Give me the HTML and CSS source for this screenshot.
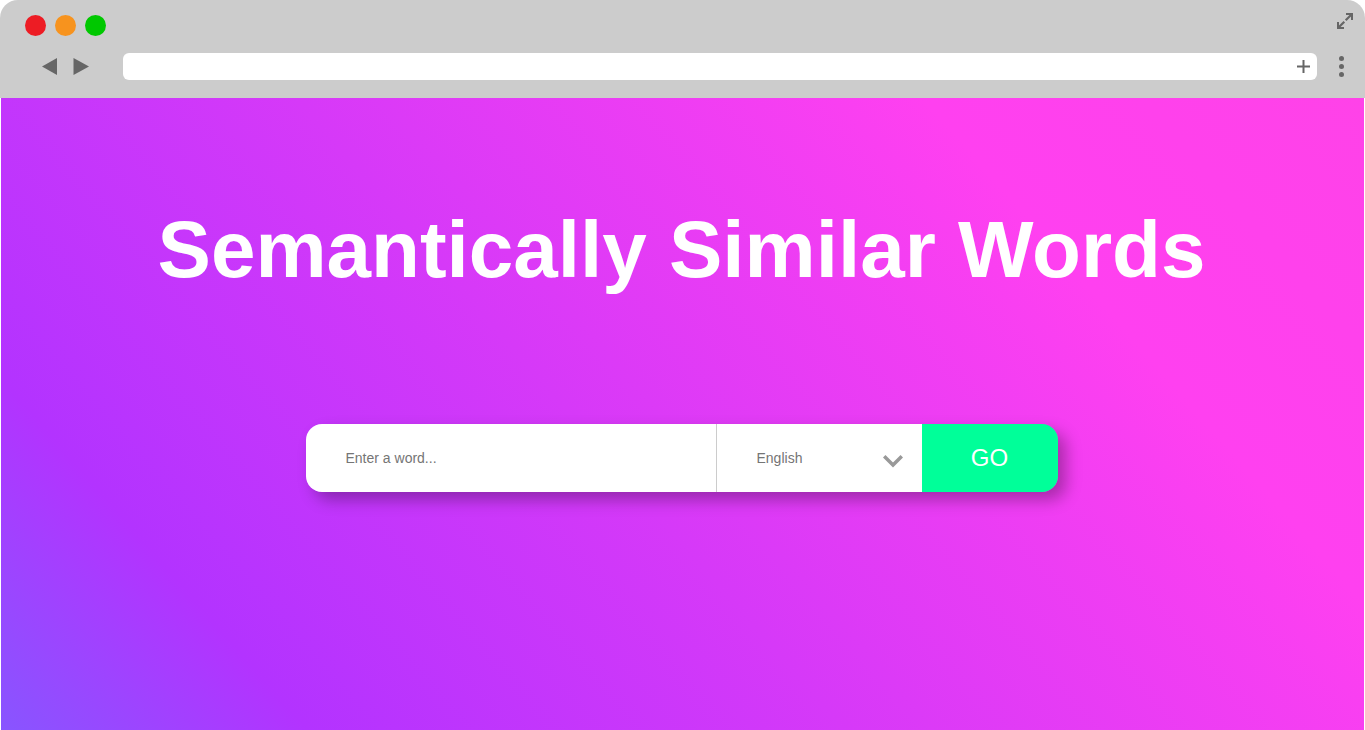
FILE: index.html
```html
<!DOCTYPE html>
<html lang="en">
<head>
<meta charset="utf-8">
<title>Semantically Similar Words</title>
<meta name="viewport" content="width=device-width, initial-scale=1">
<link rel="stylesheet" href="styles.css">
</head>
<body>
<div class="window">
  <header class="chrome">
    <div class="title-bar">
      <div class="lights">
        <button class="light light-close" type="button" aria-label="Close"></button>
        <button class="light light-minimize" type="button" aria-label="Minimize"></button>
        <button class="light light-zoom" type="button" aria-label="Zoom"></button>
      </div>
      <button class="icon-button" type="button" aria-label="Full screen">
        <svg width="18" height="18" viewBox="0 0 18 18" fill="none" stroke="#666" stroke-width="2">
          <path d="M10 2h6v6M2 10v6h6"/>
          <path d="M16 2 9.700 8.300M8.300 9.700 2 16" stroke-width="2.200"/>
        </svg>
      </button>
    </div>
    <div class="tool-bar">
      <nav class="history" aria-label="History">
        <button class="icon-button" type="button" aria-label="Back">
          <svg width="16" height="17" viewBox="0 0 16 17"><path d="M0 8.500 15 0v17z" fill="#666"/></svg>
        </button>
        <button class="icon-button" type="button" aria-label="Forward">
          <svg width="16" height="17" viewBox="0 0 16 17"><path d="M16 8.500.5 0v17z" fill="#666"/></svg>
        </button>
      </nav>
      <div class="address">
        <input class="address-input" type="text" aria-label="Address">
        <button class="icon-button" type="button" aria-label="New tab">
          <svg width="13" height="13" viewBox="0 0 13 13"><path d="M6.500 0v13M0 6.500h13" stroke="#666" stroke-width="2"/></svg>
        </button>
      </div>
      <button class="icon-button" type="button" aria-label="Menu">
        <svg width="5" height="21" viewBox="0 0 5 21" fill="#666"><circle cx="2.500" cy="2.500" r="2.500"/><circle cx="2.500" cy="10.500" r="2.500"/><circle cx="2.500" cy="18.500" r="2.500"/></svg>
      </button>
    </div>
  </header>
  <main class="page">
    <h1 class="heading">Semantically Similar Words</h1>
    <form class="search">
      <input class="word" type="text" placeholder="Enter a word..." aria-label="Word">
      <select class="language" aria-label="Language">
        <option>English</option>
      </select>
      <svg class="chevron" width="20" height="14" viewBox="0 0 20 14" fill="none" stroke="#999" stroke-width="3.500" aria-hidden="true"><path d="M1.200 2.200 10 11 18.800 2.200"/></svg>
      <button class="go" type="submit">GO</button>
    </form>
  </main>
</div>
</body>
</html>
```
FILE: styles.css
```css
* {
  box-sizing: border-box;
}

body {
  margin: 0;
  background: #fff;
  font-family: Arial, "Liberation Sans", sans-serif;
}

button,
input,
select {
  margin: 0;
  padding: 0;
  border: 0;
  font-family: inherit;
}

svg {
  display: block;
}

.window {
  display: flex;
  flex-direction: column;
  min-height: 100vh;
}

.chrome {
  display: flex;
  flex-direction: column;
  gap: 17px;
  padding: 12px 11px 18px 25px;
  border-radius: 18px 18px 0 0;
  background: #ccc;
}

.title-bar {
  display: flex;
  justify-content: space-between;
  align-items: flex-start;
}

.lights {
  display: flex;
  gap: 9px;
  padding-top: 3px;
}

.light {
  width: 21px;
  height: 21px;
  border-radius: 50%;
}

.light-close {
  background: #ed1c24;
}

.light-minimize {
  background: #f7931e;
}

.light-zoom {
  background: #00c800;
}

.icon-button {
  background: none;
}

.tool-bar {
  display: flex;
  align-items: center;
  padding: 0 10px 0 17px;
}

.history {
  display: flex;
  gap: 15px;
  margin-right: 34px;
}

.address {
  display: flex;
  flex: 1;
  align-items: center;
  height: 27px;
  margin-right: 22px;
  padding-right: 7px;
  border-radius: 6px;
  background: #fff;
}

.address-input {
  flex: 1;
  min-width: 0;
  height: 27px;
  padding-left: 12px;
  border-radius: 6px;
  outline: 0;
  background: none;
}

.page {
  display: flex;
  flex: 1;
  flex-direction: column;
  align-items: center;
  gap: 128px;
  margin: 0 1px;
  padding: 106px 26px 64px 24px;
  background: linear-gradient(49deg, #8855ff, #b333ff 16%, #ff40f0 77%, #ff42e8);
}

.heading {
  margin: 0;
  color: #fff;
  font-size: 80px;
  line-height: 92px;
  text-align: center;
}

.search {
  position: relative;
  display: flex;
  width: 100%;
  max-width: 752px;
  height: 68px;
  border-radius: 16px;
  box-shadow: 8px 8px 16px rgba(0, 0, 0, 0.3);
}

.word,
.language {
  background: #fff;
  color: #757575;
  font-size: 14px;
}

.word {
  flex: 1;
  min-width: 0;
  padding: 0 40px;
  border-right: 1px solid #ccc;
  border-radius: 16px 0 0 16px;
}

.word::placeholder {
  color: #757575;
}

.language {
  width: 205px;
  padding: 0 40px;
  border-radius: 0;
  appearance: none;
}

.chevron {
  position: absolute;
  top: 30px;
  right: 155px;
  pointer-events: none;
}

.go {
  width: 136px;
  border-radius: 0 16px 16px 0;
  background: #00ff99;
  color: #fff;
  font-size: 24px;
}
```
